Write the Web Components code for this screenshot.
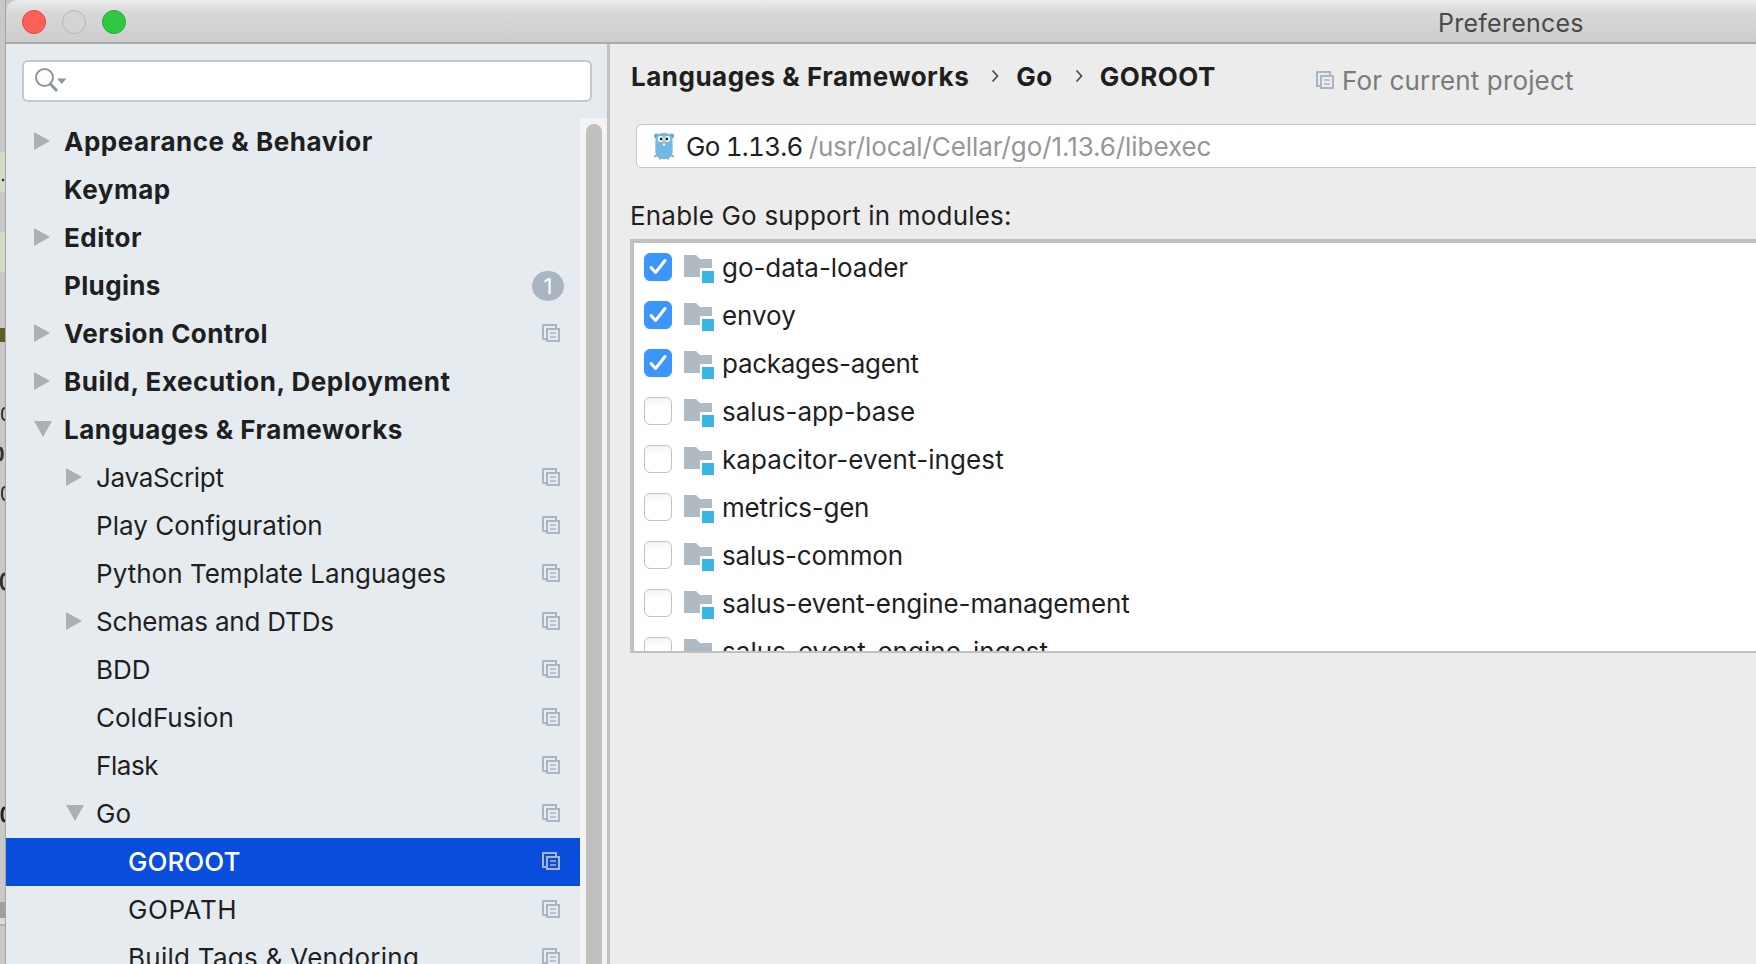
<!DOCTYPE html>
<html>
<head>
<meta charset="utf-8">
<title>Preferences</title>
<style>
  html, body { margin: 0; height: 964px; overflow: hidden; background: #c8c8c8; }
  body { font-family: Inter, "Noto Sans", "Liberation Sans", sans-serif; font-size: 26px; color: #1f1f1f; }
</style>
</head>
<body>
<pref-window>
  <tree-row slot="tree" level="0" arrow="right" bold>Appearance &amp; Behavior</tree-row>
  <tree-row slot="tree" level="0" bold>Keymap</tree-row>
  <tree-row slot="tree" level="0" arrow="right" bold>Editor</tree-row>
  <tree-row slot="tree" level="0" bold badge="1" style="--ls:0.35px">Plugins</tree-row>
  <tree-row slot="tree" level="0" arrow="right" bold copy style="--ls:0.42px">Version Control</tree-row>
  <tree-row slot="tree" level="0" arrow="right" bold>Build, Execution, Deployment</tree-row>
  <tree-row slot="tree" level="0" arrow="down" bold>Languages &amp; Frameworks</tree-row>
  <tree-row slot="tree" level="1" arrow="right" copy style="--ls:-0.3px">JavaScript</tree-row>
  <tree-row slot="tree" level="1" copy>Play Configuration</tree-row>
  <tree-row slot="tree" level="1" copy>Python Template Languages</tree-row>
  <tree-row slot="tree" level="1" arrow="right" copy style="--ls:-0.2px">Schemas and DTDs</tree-row>
  <tree-row slot="tree" level="1" copy>BDD</tree-row>
  <tree-row slot="tree" level="1" copy>ColdFusion</tree-row>
  <tree-row slot="tree" level="1" copy style="--ls:-0.4px">Flask</tree-row>
  <tree-row slot="tree" level="1" arrow="down" copy>Go</tree-row>
  <tree-row slot="tree" level="2" copy selected>GOROOT</tree-row>
  <tree-row slot="tree" level="2" copy style="--ls:0.55px">GOPATH</tree-row>
  <tree-row slot="tree" level="2" copy style="--ls:0.27px">Build Tags &amp; Vendoring</tree-row>

  <module-row slot="modules" checked>go-data-loader</module-row>
  <module-row slot="modules" checked>envoy</module-row>
  <module-row slot="modules" checked style="--ls:-0.29px">packages-agent</module-row>
  <module-row slot="modules">salus-app-base</module-row>
  <module-row slot="modules" style="--ls:0.1px">kapacitor-event-ingest</module-row>
  <module-row slot="modules" style="--ls:-0.25px">metrics-gen</module-row>
  <module-row slot="modules" style="--ls:-0.14px">salus-common</module-row>
  <module-row slot="modules" style="--ls:-0.09px">salus-event-engine-management</module-row>
  <module-row slot="modules" style="--ls:0.04px">salus-event-engine-ingest</module-row>
</pref-window>

<script>
  const COPY_SVG = `
    <svg width="18" height="18" viewBox="0 0 18 18" fill="none" stroke="currentColor" stroke-width="2">
      <path d="M5 15H1V1H14V4"/>
      <rect x="5" y="5" width="12" height="12"/>
      <path d="M8 9H14M8 13H14" stroke-width="1.6"/>
    </svg>`;

  class CopyIcon extends HTMLElement {
    constructor() {
      super();
      this.attachShadow({ mode: 'open' });
    }
    connectedCallback() {
      this.shadowRoot.innerHTML = `
        <style>
          :host { display: block; width: 18px; height: 18px; color: #a9b6c1; }
          svg { display: block; }
        </style>
        ${COPY_SVG}`;
    }
  }
  customElements.define('copy-icon', CopyIcon);

  class TrafficLight extends HTMLElement {
    constructor() {
      super();
      this.attachShadow({ mode: 'open' });
    }
    connectedCallback() {
      this.shadowRoot.innerHTML = `
        <style>
          :host {
            display: block; width: 24px; height: 24px; box-sizing: border-box;
            border-radius: 50%; border: 1px solid var(--edge);
            background: var(--fill);
          }
        </style>`;
    }
  }
  customElements.define('traffic-light', TrafficLight);

  class TitleBar extends HTMLElement {
    constructor() {
      super();
      this.attachShadow({ mode: 'open' });
    }
    connectedCallback() {
      this.shadowRoot.innerHTML = `
        <style>
          :host {
            display: flex; align-items: center; box-sizing: border-box; height: 44px;
            padding: 2px 0 0 16px; gap: 16px;
            border-top-left-radius: 12px;
            border-bottom: 2px solid #a9a9a9;
            background: linear-gradient(#ececec, #d8d8d8 30%, #cdcdcd);
          }
          .title { margin: 2px 0 0 1296px; color: #4a4a4a; letter-spacing: 0.25px; font-size: 25px; white-space: nowrap; }
        </style>
        <traffic-light style="--fill:#fe5f58;--edge:#e2463f"></traffic-light>
        <traffic-light style="--fill:#d4d4d4;--edge:#b8b8b8"></traffic-light>
        <traffic-light style="--fill:#2fc840;--edge:#25a934"></traffic-light>
        <span class="title">Preferences</span>`;
    }
  }
  customElements.define('title-bar', TitleBar);

  class SearchBox extends HTMLElement {
    constructor() {
      super();
      this.attachShadow({ mode: 'open' });
    }
    connectedCallback() {
      this.shadowRoot.innerHTML = `
        <style>
          :host {
            display: flex; align-items: center; box-sizing: border-box; height: 42px;
            margin: 16px 15px 16px 16px; padding-left: 10px;
            background: #fff; border: 2px solid #c3c8cc; border-radius: 6px;
          }
          svg { display: block; }
        </style>
        <svg width="34" height="28" viewBox="0 0 34 28" fill="none">
          <circle cx="10.5" cy="10.5" r="8.5" stroke="#8b98a2" stroke-width="2"/>
          <path d="M16.5 17L23 24" stroke="#8b98a2" stroke-width="3"/>
          <path d="M23 11.5H32.5L27.7 17Z" fill="#8b98a2"/>
        </svg>`;
    }
  }
  customElements.define('search-box', SearchBox);

  class TreeRow extends HTMLElement {
    constructor() {
      super();
      this.attachShadow({ mode: 'open' });
    }
    connectedCallback() {
      const level = Number(this.getAttribute('level') || 0);
      const arrow = this.getAttribute('arrow');
      let arrowSvg = '';
      if (arrow === 'right') {
        arrowSvg = '<svg width="18" height="18" viewBox="0 0 18 18"><path d="M0 0L16 9L0 18Z" fill="#afafaf"/></svg>';
      } else if (arrow === 'down') {
        arrowSvg = '<svg width="18" height="18" viewBox="0 0 18 18"><path d="M0 1H18L9 17Z" fill="#afafaf"/></svg>';
      }
      let tail = '';
      if (this.hasAttribute('copy')) tail = '<copy-icon></copy-icon>';
      if (this.hasAttribute('badge')) tail = `<span class="badge">${this.getAttribute('badge')}</span>`;
      this.shadowRoot.innerHTML = `
        <style>
          :host {
            display: flex; align-items: center; height: 48px; flex: none; box-sizing: border-box;
            padding: 0 20px 2px ${28 + level * 32}px;
            white-space: nowrap;
          }
          :host([bold]) .label { font-weight: 700; letter-spacing: var(--ls, 0.53px); }
          :host([selected]) { background: #084ddb; color: #fff; }
          :host([selected]) .label { font-weight: 500; }
          .arrow { width: 30px; flex: none; display: flex; align-items: center; }
          .arrow svg { display: block; }
          .label { flex: 1; letter-spacing: var(--ls, 0.02px); }
          .badge {
            width: 32px; height: 30px; margin: 2px -4px 0 0; border-radius: 50%;
            background: #a9b6c1; color: #fff; font-size: 22px;
            display: flex; align-items: center; justify-content: center;
          }
        </style>
        <span class="arrow">${arrowSvg}</span>
        <span class="label"><slot></slot></span>
        ${tail}`;
    }
  }
  customElements.define('tree-row', TreeRow);

  class ModuleRow extends HTMLElement {
    constructor() {
      super();
      this.attachShadow({ mode: 'open' });
    }
    connectedCallback() {
      this.shadowRoot.innerHTML = `
        <style>
          :host {
            display: flex; align-items: center; height: 48px; flex: none;
            padding-left: 10px; white-space: nowrap;
          }
          .box {
            width: 28px; height: 28px; box-sizing: border-box; border-radius: 6px; flex: none;
            border: 1.5px solid #c2c2c2;
            background: linear-gradient(#f5f5f5, #fff 35%);
          }
          :host([checked]) .box { background: #3a96fb; border-color: #3a96fb; }
          .box svg { display: block; margin: -1.5px; }
          .folder { display: block; width: 30px; height: 28px; margin: 4px 8px 0 12px; flex: none; }
          .name { letter-spacing: var(--ls, -0.05px); }
        </style>
        <span class="box">${this.hasAttribute('checked')
          ? '<svg width="28" height="28" viewBox="0 0 28 28"><path d="M7 14.5L11.5 19.5L21 7.5" fill="none" stroke="#fff" stroke-width="3" stroke-linecap="round" stroke-linejoin="round"/></svg>'
          : ''}</span>
        <svg class="folder" viewBox="0 0 30 28">
          <path d="M0 0H12L16 4H28V13H16V22H0Z" fill="#afbac2"/>
          <rect x="18" y="16" width="12" height="12" fill="#3db5e4"/>
        </svg>
        <span class="name"><slot></slot></span>`;
    }
  }
  customElements.define('module-row', ModuleRow);

  class GoSdk extends HTMLElement {
    constructor() {
      super();
      this.attachShadow({ mode: 'open' });
    }
    connectedCallback() {
      this.shadowRoot.innerHTML = `
        <style>
          :host {
            display: flex; align-items: center; box-sizing: border-box; height: 44px;
            margin: 30px -20px 0 6px; padding-left: 17px;
            background: #fff; border: 1.5px solid #c6c6c6; border-radius: 6px 0 0 6px;
            white-space: nowrap;
          }
          svg { display: block; flex: none; margin-right: 12px; }
          .ver { letter-spacing: -0.75px; font-variant-numeric: tabular-nums; }
          .path { color: #979797; margin-left: 6px; letter-spacing: -0.08px; }
        </style>
        <svg width="20" height="28" viewBox="0 0 20 28">
          <path d="M3 23L0 25M17 23L20 25M6 27.5V25M14 27.5V25" stroke="#d59a84" stroke-width="2"/>
          <circle cx="2.5" cy="4" r="2.5" fill="#5fa9d8"/>
          <circle cx="17.5" cy="4" r="2.5" fill="#5fa9d8"/>
          <path d="M1.5 8C1.5 3 5 1 10 1S18.5 3 18.5 8C18.5 12 19 18 18.5 21C18 25 15 27 10 27S2 25 1.5 21C1 18 1.5 12 1.5 8Z" fill="#70bae8"/>
          <circle cx="6.7" cy="7" r="3" fill="#fff"/>
          <circle cx="13.3" cy="7" r="3" fill="#fff"/>
          <circle cx="7.2" cy="7" r="1.4" fill="#222"/>
          <circle cx="12.8" cy="7" r="1.4" fill="#222"/>
          <ellipse cx="10" cy="11" rx="2" ry="1.3" fill="#d9b49a"/>
          <rect x="9" y="12" width="2" height="2" fill="#fff"/>
        </svg>
        <span class="ver">Go 1.13.6</span><span class="path">/usr/local/Cellar/go/1.13.6/libexec</span>`;
    }
  }
  customElements.define('go-sdk', GoSdk);

  class CrumbBar extends HTMLElement {
    constructor() {
      super();
      this.attachShadow({ mode: 'open' });
    }
    connectedCallback() {
      const chevron = '<svg class="chev" width="8" height="14" viewBox="0 0 8 14"><path d="M1.5 1.5L6.5 7L1.5 12.5" fill="none" stroke="#444" stroke-width="1.6"/></svg>';
      this.shadowRoot.innerHTML = `
        <style>
          :host {
            display: flex; align-items: center; height: 32px; padding-bottom: 2px; margin: 16px 0 0 1px;
            white-space: nowrap;
          }
          b { font-weight: 700; letter-spacing: 0.5px; }
          .chev { display: block; margin: 0 17px 0 22px; flex: none; }
          copy-icon { margin: 8px 0 0 100px; }
          .scope { margin: 8px 0 0 8px; color: #7b7b7b; letter-spacing: 0.15px; }
        </style>
        <b>Languages &amp; Frameworks</b>${chevron}<b>Go</b>${chevron}<b>GOROOT</b>
        <copy-icon></copy-icon>
        <span class="scope">For current project</span>`;
    }
  }
  customElements.define('crumb-bar', CrumbBar);

  class PrefWindow extends HTMLElement {
    constructor() {
      super();
      this.attachShadow({ mode: 'open' });
    }
    connectedCallback() {
      this.shadowRoot.innerHTML = `
        <style>
          :host { display: flex; height: 964px; overflow: hidden; }
          .backdrop {
            width: 6px; flex: none; box-sizing: border-box; border-right: 1px solid #a4a4a4;
            background: linear-gradient(#c8c8c8 152px, #d5dcc8 152px 192px, #c8c8c8 192px 232px,
              #d5dcc8 232px 272px, #c8c8c8 272px 328px, #5f5c2c 328px 342px, #c8c8c8 342px 902px,
              #a0a0a0 902px 918px, #dcdcdc 918px 924px, #b0b0b0 924px 926px, #c8c8c8 926px);
          }
          .backdrop svg { display: block; }
          .window { flex: 1; min-width: 0; display: flex; flex-direction: column; overflow: hidden; }
          .body { flex: 1; min-height: 0; display: flex; }
          .side { width: 601px; flex: none; display: flex; flex-direction: column; background: #e6ebf0; min-height: 0; }
          .side-main { flex: 1; min-height: 0; display: flex; }
          .tree { flex: 1; min-width: 0; display: flex; flex-direction: column; overflow: hidden; }
          .track { width: 27px; flex: none; box-sizing: border-box; padding: 6px 5px 0 6px; background: #f4f4f4; }
          .thumb { height: 100%; background: #c0c0c0; border-radius: 8px 8px 0 0; }
          .divider { width: 3px; flex: none; background: #c0c0c0; }
          .main { flex: 1; min-width: 0; padding-left: 20px; background: #ececec; overflow: hidden; }
          .caption { height: 34px; line-height: 34px; margin-top: 31px; letter-spacing: 0.18px; }
          .modules {
            margin: 6px -20px 0 0; height: 414px; box-sizing: border-box; overflow: hidden;
            background: #fff; border: solid #c0c0c0; border-width: 4px 0 2px 4px;
            display: flex; flex-direction: column;
          }
        </style>
        <div class="backdrop">
          <svg width="5" height="964" viewBox="0 0 5 964" fill="none" stroke="#333" stroke-width="2">
            <circle cx="3" cy="180" r="1.2" fill="#222" stroke="none"/>
            <path d="M5 408C1 408 1 420 5 420"/>
            <path d="M0 448C3 449 3 459 0 460" stroke-width="3"/>
            <path d="M5 487C1 487 1 499 5 500"/>
            <path d="M5 574C0 574 0 589 5 589" stroke-width="3"/>
            <path d="M5 808C1 808 1 821 5 821" stroke-width="3" stroke="#222"/>
          </svg>
        </div>
        <div class="window">
          <title-bar></title-bar>
          <div class="body">
            <div class="side">
              <search-box></search-box>
              <div class="side-main">
                <div class="tree"><slot name="tree"></slot></div>
                <div class="track"><div class="thumb"></div></div>
              </div>
            </div>
            <div class="divider"></div>
            <div class="main">
              <crumb-bar></crumb-bar>
              <go-sdk></go-sdk>
              <div class="caption">Enable Go support in modules:</div>
              <div class="modules"><slot name="modules"></slot></div>
            </div>
          </div>
        </div>`;
    }
  }
  customElements.define('pref-window', PrefWindow);
</script>
</body>
</html>
